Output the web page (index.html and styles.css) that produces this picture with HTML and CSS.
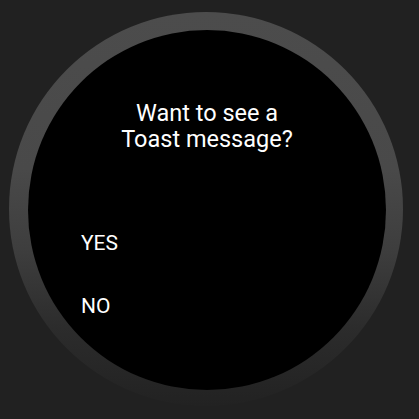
FILE: index.html
```html
<!DOCTYPE html>
<html>
<head>
<meta charset="utf-8">
<link rel="stylesheet" href="styles.css">
</head>
<body>
<div class="stage">
  <div class="bezel">
    <div class="screen">
      <div class="title">Want to see a<br>Toast message?</div>
      <ul class="options">
        <li class="option">YES</li>
        <li class="option">NO</li>
      </ul>
    </div>
  </div>
</div>
</body>
</html>
```
FILE: styles.css
```css
html, body {
  margin: 0;
  padding: 0;
  background: #212121;
}
.stage {
  width: 419px;
  height: 419px;
  padding: 12px 0 0 9px;
  box-sizing: border-box;
}
.bezel {
  width: 394px;
  height: 394px;
  border-radius: 50%;
  box-sizing: border-box;
  padding: 18px 18px 16px 19px;
  background: linear-gradient(to bottom, #4c4c4c 0%, #494949 40%, #3e3e3e 60%, #2c2c2c 80%, #222222 100%);
}
.screen {
  width: 358px;
  height: 360px;
  border-radius: 50%;
  background: #000;
  box-sizing: border-box;
  padding: 70px 0 0 53px;
  display: flex;
  flex-direction: column;
  font-family: Roboto, "Noto Sans", sans-serif;
  color: #fff;
}
.title {
  text-align: center;
  margin-left: -53px;
  font-size: 23.5px;
  line-height: 26px;
}
.options {
  list-style: none;
  margin: 78px 0 0;
  padding: 0;
  display: flex;
  flex-direction: column;
  gap: 37px;
  font-size: 21px;
  line-height: 26px;
}
.option {
  height: 26px;
}
```
